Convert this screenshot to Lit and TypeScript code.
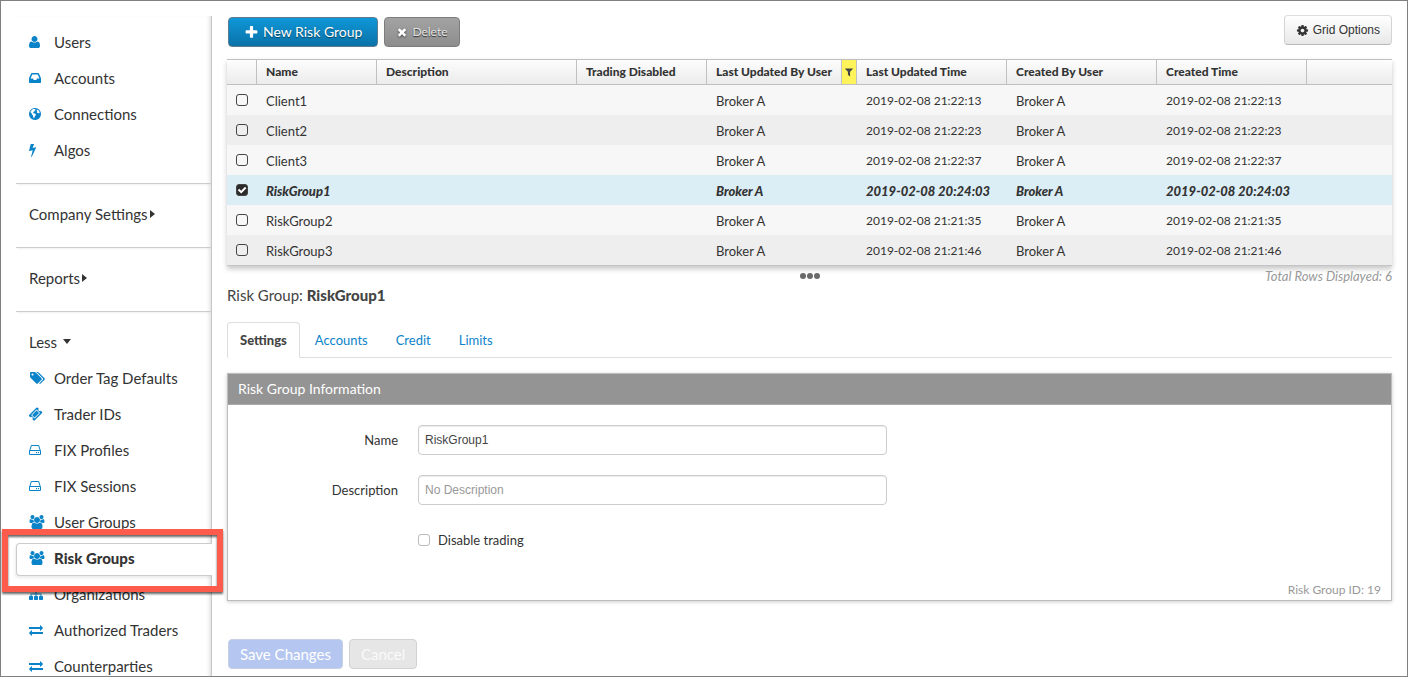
import { LitElement, html, css, svg, nothing } from "lit";
import { customElement, property, state } from "lit/decorators.js";
import { classMap } from "lit/directives/class-map.js";

/* Glyphs on a 1792-unit grid; wide ones use 2048 units across. */
const ICONS: Record<string, { w?: number; d: string }> = {
  user: { w: 1792, d: "M1600 1405q0 120-73 189.5t-194 69.5h-874q-121 0-194-69.5t-73-189.5q0-53 3.5-103.5t14-109 26.5-108.5 43-97.5 62-81 85.5-53.5 111.5-20q9 0 42 21.5t74.5 48 108 48 133.5 21.5 133.5-21.5 108-48 74.5-48 42-21.5q61 0 111.5 20t85.5 53.5 62 81 43 97.5 26.5 108.5 14 109 3.5 103.5zm-320-893q0 159-112.5 271.5t-271.5 112.5-271.5-112.5-112.5-271.5 112.5-271.5 271.5-112.5 271.5 112.5 112.5 271.5z" },
  inbox: { d: "M1151 960h316q-1-3-2.5-8.5t-2.5-7.5l-212-496h-708l-212 496q-1 3-2.5 8t-2.5 8h316l95 192h320zm513 30v482q0 26-19 45t-45 19h-1408q-26 0-45-19t-19-45v-482q0-62 25-123l238-552q10-25 36.5-42t52.5-17h832q26 0 52.5 17t36.5 42l238 552q25 61 25 123z" },
  globe: { d: "M896 128a768 768 0 1 0 .1 0zM440 420l200-150 240 0 100 90-80 60-60 130-130 60-60 110 60 80 170 20 130 110-30 170-120 90-30 190-90 60-80-170-20-180-140-140-30-140-130-110-20-120zM1130 330l170 60 140 160 60 160-90 110-110-60-100 20-80-130 60-110-80-90z" },
  bolt: { d: "M1333 566q18 20 7 44l-540 1157q-13 25-42 25-4 0-14-2-17-5-25.5-19t-4.5-30l197-808-406 101q-4 1-12 1-18 0-31-11-18-15-13-39l201-825q4-16 19-26t34-10h328q19 0 32 12.5t13 29.5q0 8-5 18l-171 463 396-98q8-2 12-2 19 0 34 15z" },
  tags: { w: 2048, d: "M576 448q0-53-37.5-90.5t-90.5-37.5-90.5 37.5-37.5 90.5 37.5 90.5 90.5 37.5 90.5-37.5 37.5-90.5zm1067 576q0 53-37 90l-491 492q-39 37-91 37-53 0-90-37l-715-716q-38-37-64.5-101t-26.5-117v-416q0-52 38-90t90-38h416q53 0 117 26.5t102 64.5l715 714q37 39 37 91zm384 0q0 53-37 90l-491 492q-39 37-91 37-36 0-59-14t-53-45l470-470q37-37 37-90 0-52-37-91l-715-714q-38-38-102-64.5t-117-26.5h224q53 0 117 26.5t102 64.5l715 714q37 39 37 91z" },
  ticket: { d: "M1024 452l316 316-572 572-316-316zm-211 979l618-618q19-19 19-45t-19-45l-362-362q-18-18-45-18t-45 18l-618 618q-19 19-19 45t19 45l362 362q18 18 45 18t45-18zm889-637l-907 908q-37 37-90.5 37t-90.5-37l-126-126q56-56 56-136t-56-136-136-56-136 56l-125-126q-37-37-37-90.5t37-90.5l907-906q37-37 90.5-37t90.5 37l125 125q-56 56-56 136t56 136 136 56 136-56l126 125q37 37 37 90.5t-37 90.5z" },
  drive: { d: "M1168 1216q0 33-23.5 56.5t-56.5 23.5-56.5-23.5-23.5-56.5 23.5-56.5 56.5-23.5 56.5 23.5 23.5 56.5zm256 0q0 33-23.5 56.5t-56.5 23.5-56.5-23.5-23.5-56.5 23.5-56.5 56.5-23.5 56.5 23.5 23.5 56.5zm112 160v-320q0-13-9.5-22.5t-22.5-9.5h-1216q-13 0-22.5 9.5t-9.5 22.5v320q0 13 9.5 22.5t22.5 9.5h1216q13 0 22.5-9.5t9.5-22.5zm-1230-480h1180l-157-482q-4-13-16-21.5t-26-8.5h-782q-14 0-26 8.5t-16 21.5zm1358 160v320q0 66-47 113t-113 47h-1216q-66 0-113-47t-47-113v-320q0-25 16-75l197-606q17-53 63-86t101-33h782q55 0 101 33t63 86l197 606q16 50 16 75z" },
  users: { w: 2048, d: "M657 896q-162 5-265 128h-134q-82 0-138-40.5t-56-118.5q0-353 124-353 6 0 43.5 21t97.5 42.5 119 21.5q67 0 133-23-5 37-5 66 0 159 81 256zm1071 637q0 120-73 189.5t-194 69.5h-874q-121 0-194-69.5t-73-189.5q0-53 3.5-103.5t14-109 26.5-108.5 43-97.5 62-81 85.5-53.5 111.5-20q10 0 43 21.5t73 48 107 48 135 21.5 135-21.5 107-48 73-48 43-21.5q61 0 111.5 20t85.5 53.5 62 81 43 97.5 26.5 108.5 14 109 3.5 103.5zm-1024-1277q0 106-75 181t-181 75-181-75-75-181 75-181 181-75 181 75 75 181zm704 384q0 159-112.5 271.5t-271.5 112.5-271.5-112.5-112.5-271.5 112.5-271.5 271.5-112.5 271.5 112.5 112.5 271.5zm576 225q0 78-56 118.5t-138 40.5h-134q-103-123-265-128 81-97 81-256 0-29-5-66 66 23 133 23 59 0 119-21.5t97.5-42.5 43.5-21q124 0 124 353zm-128-609q0 106-75 181t-181 75-181-75-75-181 75-181 181-75 181 75 75 181z" },
  sitemap: { w: 1792, d: "M1792 1248v320q0 40-28 68t-68 28h-320q-40 0-68-28t-28-68v-320q0-40 28-68t68-28h96v-192h-512v192h96q40 0 68 28t28 68v320q0 40-28 68t-68 28h-320q-40 0-68-28t-28-68v-320q0-40 28-68t68-28h96v-192h-512v192h96q40 0 68 28t28 68v320q0 40-28 68t-68 28h-320q-40 0-68-28t-28-68v-320q0-40 28-68t68-28h96v-192q0-52 38-90t90-38h512v-192h-96q-40 0-68-28t-28-68v-320q0-40 28-68t68-28h320q40 0 68 28t28 68v320q0 40-28 68t-68 28h-96v192h512q52 0 90 38t38 90v192h96q40 0 68 28t28 68z" },
  exchange: { w: 1792, d: "M1792 1184v192q0 13-9.5 22.5t-22.5 9.5h-1376v192q0 13-9.5 22.5t-22.5 9.5q-12 0-24-10l-319-320q-9-9-9-22 0-14 9-23l320-320q9-9 23-9 13 0 22.5 9.5t9.5 22.5v192h1376q13 0 22.5 9.5t9.5 22.5zm0-544q0 14-9 23l-320 320q-9 9-23 9-13 0-22.5-9.5t-9.5-22.5v-192h-1376q-13 0-22.5-9.5t-9.5-22.5v-192q0-13 9.5-22.5t22.5-9.5h1376v-192q0-14 9-23t23-9q12 0 24 10l319 319q9 9 9 23z" },
  cog: { d: "M1152 896q0-106-75-181t-181-75-181 75-75 181 75 181 181 75 181-75 75-181zm512-109v222q0 12-8 23t-20 13l-185 28q-19 54-39 91 35 50 107 138 10 12 10 25t-9 23q-27 37-99 108t-94 71q-12 0-26-9l-138-108q-44 23-91 38-16 136-29 186-7 28-36 28h-222q-14 0-24.5-8.5t-11.5-21.5l-28-184q-49-16-90-37l-141 107q-10 9-25 9-14 0-25-11-126-114-165-168-7-10-7-23 0-12 8-23 15-21 51-66.5t54-70.5q-27-50-41-99l-183-27q-13-2-21-12.5t-8-23.5v-222q0-12 8-23t19-13l186-28q14-46 39-92-40-57-107-138-10-12-10-24 0-10 9-23 26-36 98.5-107.5t94.5-71.5q13 0 26 10l138 107q44-23 91-38 16-136 29-186 7-28 36-28h222q14 0 24.5 8.5t11.5 21.5l28 184q49 16 90 37l142-107q9-9 24-9 13 0 25 10 129 119 165 170 7 8 7 22 0 12-8 23-15 21-51 66.5t-54 70.5q26 50 41 98l183 28q13 2 21 12.5t8 23.5z" },
  plus: { d: "M1600 736v192q0 40-28 68t-68 28h-416v416q0 40-28 68t-68 28h-192q-40 0-68-28t-28-68v-416h-416q-40 0-68-28t-28-68v-192q0-40 28-68t68-28h416v-416q0-40 28-68t68-28h192q40 0 68 28t28 68v416h416q40 0 68 28t28 68z" },
  times: { d: "M1490 1322q0 40-28 68l-136 136q-28 28-68 28t-68-28l-294-294-294 294q-28 28-68 28t-68-28l-136-136q-28-28-28-68t28-68l294-294-294-294q-28-28-28-68t28-68l136-136q28-28 68-28t68 28l294 294 294-294q28-28 68-28t68 28l136 136q28 28 28 68t-28 68l-294 294 294 294q28 28 28 68z" },
  filter: { d: "M1595 295q17 41-14 70l-493 493v742q0 42-39 59-13 5-25 5-27 0-45-19l-256-256q-19-19-19-45v-486l-493-493q-31-29-14-70 17-39 59-39h1280q42 0 59 39z" },
};

/* Left bearing trimmed per glyph so every icon starts at the same edge. */
const BEARING: Record<string, number> = {
  user: 192, inbox: 128, globe: 128, bolt: 440, ticket: 55, drive: 128,
};

@customElement("fa-icon")
export class FaIcon extends LitElement {
  static styles = css`
    :host { display: inline-flex; flex: none; }
    .glyph { display: block; height: var(--icon-size, 14px); width: auto; overflow: visible; fill: currentColor; fill-rule: evenodd; }
  `;
  @property() name = "";
  @property({ type: Boolean }) flush = false;
  render() {
    const icon = ICONS[this.name];
    if (!icon) return nothing;
    const x = this.flush ? BEARING[this.name] ?? 0 : 0;
    return html`<svg class="glyph" viewBox="${x} 0 ${icon.w ?? 1792} 1792" aria-hidden="true">${svg`<path d=${icon.d}></path>`}</svg>`;
  }
}

interface NavItem { label: string; icon: string; }

const PRIMARY: NavItem[] = [
  { label: "Users", icon: "user" },
  { label: "Accounts", icon: "inbox" },
  { label: "Connections", icon: "globe" },
  { label: "Algos", icon: "bolt" },
];
const MORE: NavItem[] = [
  { label: "Order Tag Defaults", icon: "tags" },
  { label: "Trader IDs", icon: "ticket" },
  { label: "FIX Profiles", icon: "drive" },
  { label: "FIX Sessions", icon: "drive" },
  { label: "User Groups", icon: "users" },
  { label: "Risk Groups", icon: "users" },
  { label: "Organizations", icon: "sitemap" },
  { label: "Authorized Traders", icon: "exchange" },
  { label: "Counterparties", icon: "exchange" },
];

@customElement("side-nav")
export class SideNav extends LitElement {
  static styles = css`
    :host { display: block; color: #333; font-size: 15px; }
    .nav { min-height: 100%; box-sizing: border-box; border-right: 1px solid #c8c8c8; box-shadow: inset -4px 0 4px -3px rgba(0, 0, 0, 0.16); }
    .group { padding: 12px 0 15px; border-bottom: 1px solid #ccc; box-shadow: 0 2px 2px -1px rgba(0, 0, 0, 0.06); }
    .group:first-child { padding-top: 8px; }
    .group:last-child { border-bottom: 0; box-shadow: none; }
    .list { list-style: none; margin: 0; padding: 0; }
    .item { position: relative; height: 36px; }
    .link { display: grid; grid-template-columns: 25px 1fr; align-items: center; box-sizing: border-box; height: 36px; padding: 0 0 1px 13px; color: inherit; text-decoration: none; white-space: nowrap; }
    .link fa-icon { color: #0b83c9; }
    .active { box-sizing: border-box; padding-top: 3px; margin-right: -1px; }
    .active .link { height: 33px; padding: 0 0 4px 12px; border: 1px solid #ccc; border-right: 0; border-radius: 4px 0 0 4px; background: #fff; box-shadow: -1px 2px 3px rgba(0, 0, 0, 0.08); font-weight: 900; }
    .callout { position: absolute; z-index: 2; top: -11px; bottom: -16px; left: -14px; right: -11px; border: 6px solid #fd5b4c; filter: drop-shadow(0 2px 1px rgba(0, 0, 0, 0.6)); pointer-events: none; }
    .toggle { display: flex; align-items: center; gap: 2px; width: 100%; height: 36px; padding: 0 0 1px 13px; border: 0; background: none; color: inherit; font: inherit; cursor: pointer; }
    .wide { gap: 6px; }
    .right { border: 4px solid transparent; border-left: 5px solid #333; border-right: 0; }
    .down { border: 4px solid transparent; border-top: 5px solid #333; border-bottom: 0; }
  `;
  @state() private current = "Risk Groups";

  private item(i: NavItem) {
    const active = i.label === this.current;
    return html`<li class=${classMap({ item: true, active })}>
      <a class="link" href="#" aria-current=${active ? "page" : nothing}
        @click=${(e: Event) => { e.preventDefault(); this.current = i.label; }}>
        <fa-icon name=${i.icon} flush></fa-icon><span>${i.label}</span>
      </a>
      ${active ? html`<div class="callout"></div>` : nothing}
    </li>`;
  }

  render() {
    return html`<nav class="nav" aria-label="Administration">
      <div class="group"><ul class="list">${PRIMARY.map((i) => this.item(i))}</ul></div>
      <div class="group"><button class="toggle">Company Settings<span class="right"></span></button></div>
      <div class="group"><button class="toggle">Reports<span class="right"></span></button></div>
      <div class="group">
        <button class="toggle wide" aria-expanded="true">Less<span class="down"></span></button>
        <ul class="list">${MORE.map((i) => this.item(i))}</ul>
      </div>
    </nav>`;
  }
}

interface RiskGroup { name: string; user: string; time: string; }

const GROUPS: RiskGroup[] = [
  { name: "Client1", user: "Broker A", time: "2019-02-08 21:22:13" },
  { name: "Client2", user: "Broker A", time: "2019-02-08 21:22:23" },
  { name: "Client3", user: "Broker A", time: "2019-02-08 21:22:37" },
  { name: "RiskGroup1", user: "Broker A", time: "2019-02-08 20:24:03" },
  { name: "RiskGroup2", user: "Broker A", time: "2019-02-08 21:21:35" },
  { name: "RiskGroup3", user: "Broker A", time: "2019-02-08 21:21:46" },
];

@customElement("group-grid")
export class GroupGrid extends LitElement {
  static styles = css`
    :host { display: block; }
    .grid { width: 100%; table-layout: fixed; border-collapse: separate; border-spacing: 0; border-bottom: 1px solid #c4c4c4; box-shadow: 0 3px 5px rgba(0, 0, 0, 0.22); color: #333; font-size: 13px; }
    .c30 { width: 30px; } .c120 { width: 120px; } .c130 { width: 130px; } .c150 { width: 150px; } .c200 { width: 200px; }
    .head { box-sizing: border-box; height: 26px; padding: 0; border: solid #c0c0c0; border-width: 1px 1px 1px 0; background: linear-gradient(#fdfdfd, #ebebeb); font-size: 12px; font-weight: 900; text-align: left; white-space: nowrap; }
    .head:last-child { border-right: 0; }
    .title { display: flex; align-items: center; justify-content: space-between; height: 24px; padding-left: 9px; }
    .filter { display: flex; align-items: center; justify-content: center; align-self: stretch; box-sizing: border-box; width: 15px; padding: 0; border: 0; border-left: 1px solid #c0c0c0; background: #fff35c; color: #444; --icon-size: 10px; }
    .cell { box-sizing: border-box; height: 30px; padding: 2px 0 0 9px; white-space: nowrap; }
    .time { font-size: 12px; }
    .row { background: #f7f7f7; }
    .row:nth-child(even) { background: #eee; }
    .row.selected { background: #dbedf5; font-weight: 900; font-style: italic; }
    .selected .time { font-size: 13px; }
    .check { appearance: none; display: block; box-sizing: border-box; width: 12px; height: 12px; margin: 0 0 2px; border: 1px solid #444; border-radius: 3px; background: transparent; }
    .check:checked { background: #2b2b2b; }
    .check:checked::before { content: ""; display: block; height: 10px; background: #fff; clip-path: polygon(8% 52%, 22% 38%, 42% 58%, 80% 18%, 94% 32%, 42% 84%); }
  `;

  render() {
    const head = (t: string) => html`<th class="head" scope="col"><div class="title">${t}</div></th>`;
    return html`<table class="grid">
      <colgroup>
        <col class="c30" /><col class="c120" /><col class="c200" /><col class="c130" />
        <col class="c150" /><col class="c150" /><col class="c150" /><col class="c150" /><col />
      </colgroup>
      <thead><tr>
        <th class="head"></th>${head("Name")}${head("Description")}${head("Trading Disabled")}
        <th class="head" scope="col"><div class="title">Last Updated By User<button class="filter" aria-label="Filter"><fa-icon name="filter"></fa-icon></button></div></th>
        ${head("Last Updated Time")}${head("Created By User")}${head("Created Time")}<th class="head"></th>
      </tr></thead>
      <tbody>${GROUPS.map((g) => {
        const selected = g.name === "RiskGroup1";
        return html`<tr class=${classMap({ row: true, selected })}>
          <td class="cell"><input class="check" type="checkbox" aria-label=${g.name} .checked=${selected} /></td>
          <td class="cell">${g.name}</td><td class="cell"></td><td class="cell"></td>
          <td class="cell">${g.user}</td><td class="cell time">${g.time}</td>
          <td class="cell">${g.user}</td><td class="cell time">${g.time}</td><td class="cell"></td>
        </tr>`;
      })}</tbody>
    </table>`;
  }
}

@customElement("app-root")
export class AppRoot extends LitElement {
  static styles = css`
    :host { display: grid; grid-template-columns: 196px minmax(0, 1fr); column-gap: 15px; box-sizing: border-box; height: 100vh; overflow: hidden; padding: 15px 15px 0; border: 1px solid #808080; background: #fff; color: #444; font: 13px/18px Lato, "Liberation Sans", sans-serif; }
    .main { min-width: 0; }
    .toolbar { display: flex; align-items: center; gap: 6px; height: 30px; padding: 1px 0 0 1px; margin-bottom: 12px; }
    .btn { display: inline-flex; align-items: center; justify-content: center; gap: 4px; box-sizing: border-box; height: 30px; padding: 0 15px; border: 1px solid #7d7d7d; border-radius: 4px; font: inherit; white-space: nowrap; }
    .primary { border-color: #5d7d8e; background: linear-gradient(#0f97d8, #0a72a8); color: #fff; font-size: 14px; text-shadow: 0 1px 1px rgba(0, 0, 0, 0.5); --icon-size: 15px; }
    .danger { padding: 0 11px; background: linear-gradient(#a3a3a3, #8d8d8d); color: #e4e4e4; font-size: 12px; text-shadow: 0 1px 1px rgba(0, 0, 0, 0.7); --icon-size: 12px; }
    .danger fa-icon { color: #fff; filter: drop-shadow(0 1px 1px rgba(0, 0, 0, 0.5)); }
    .options { align-self: flex-start; margin: -2px 0 0 auto; padding: 0 11px; border-color: #ddd #d4d4d4 #b8b8b8; background: linear-gradient(#fff, #e8e8e8); color: #333; font: 12px "Liberation Sans", sans-serif; --icon-size: 13px; }
    .status { display: grid; grid-template-columns: 1fr auto 1fr; align-items: center; height: 18px; margin-top: 1px; }
    .dots { grid-column: 2; display: flex; gap: 1px; padding: 0; border: 0; background: none; }
    .dot { width: 6px; height: 6px; border-radius: 50%; background: #6a6a6a; }
    .total { justify-self: end; color: #999; font-style: italic; }
    .heading { margin: 0 0 17px; font-size: 15px; line-height: 20px; font-weight: 400; }
    .strong { font-weight: 900; }
    .tabs { display: flex; gap: 2px; border-bottom: 1px solid #ddd; margin-bottom: 15px; }
    .tab { height: 36px; box-sizing: border-box; padding: 0 12px; margin-bottom: -1px; border: 1px solid transparent; border-radius: 4px 4px 0 0; background: none; color: #0b83c9; font: inherit; }
    .tab.on { border-color: #ddd; border-bottom-color: #fff; background: #fff; color: #444; font-weight: 900; }
    .panel { border: 1px solid #bdbdbd; box-shadow: 0 1px 4px rgba(0, 0, 0, 0.2); color: #333; }
    .bar { height: 31px; box-sizing: border-box; padding: 0 10px; border-bottom: 1px solid #aaa; margin: 0; background: #949494; color: #fff; font-size: 14px; line-height: 30px; font-weight: 400; }
    .form { display: grid; grid-template-columns: 170px minmax(0, 469px); column-gap: 20px; row-gap: 20px; padding: 20px 20px 0 0; }
    .label { justify-self: end; line-height: 30px; }
    .text { box-sizing: border-box; width: 100%; height: 30px; padding: 0 6px; border: 1px solid #ccc; border-radius: 4px; background: #fff; box-shadow: inset 0 1px 1px rgba(0, 0, 0, 0.08); color: #444; font: 12px "Liberation Sans", sans-serif; }
    .text::placeholder { color: #999; opacity: 1; }
    .option { grid-column: 2; display: flex; align-items: center; gap: 8px; height: 30px; }
    .box { appearance: none; box-sizing: border-box; width: 12px; height: 12px; margin: 0; border: 1px solid #bbb; border-radius: 3px; background: #fff; }
    .meta { margin: 0; padding: 26px 10px 1px; color: #999; font-size: 12px; text-align: right; }
    .actions { display: flex; gap: 6px; padding: 38px 0 0 1px; }
    .save, .cancel { padding: 0 11px; border-color: #d2d2d2; background: #e6e6e6; color: #fafafa; font-size: 15px; }
    .save { background: #b5c7f1; border-color: #c6cfe4; color: #fff; }
  `;

  render() {
    return html`
      <side-nav></side-nav>
      <main class="main">
        <div class="toolbar">
          <button class="btn primary"><fa-icon name="plus"></fa-icon>New Risk Group</button>
          <button class="btn danger"><fa-icon name="times"></fa-icon>Delete</button>
          <button class="btn options"><fa-icon name="cog"></fa-icon>Grid Options</button>
        </div>
        <group-grid></group-grid>
        <div class="status">
          <button class="dots" aria-label="Resize"><span class="dot"></span><span class="dot"></span><span class="dot"></span></button>
          <span class="total">Total Rows Displayed: 6</span>
        </div>
        <h1 class="heading">Risk Group: <span class="strong">RiskGroup1</span></h1>
        <div class="tabs" role="tablist">
          <button class="tab on" role="tab" aria-selected="true">Settings</button>
          <button class="tab" role="tab">Accounts</button>
          <button class="tab" role="tab">Credit</button>
          <button class="tab" role="tab">Limits</button>
        </div>
        <section class="panel">
          <h2 class="bar">Risk Group Information</h2>
          <div class="form">
            <label class="label" for="name">Name</label>
            <input class="text" id="name" type="text" .value=${"RiskGroup1"} />
            <label class="label" for="description">Description</label>
            <input class="text" id="description" type="text" placeholder="No Description" />
            <div class="option"><input class="box" id="disable" type="checkbox" /><label for="disable">Disable trading</label></div>
          </div>
          <p class="meta">Risk Group ID: 19</p>
        </section>
        <div class="actions">
          <button class="btn save" disabled>Save Changes</button>
          <button class="btn cancel" disabled>Cancel</button>
        </div>
      </main>`;
  }
}
